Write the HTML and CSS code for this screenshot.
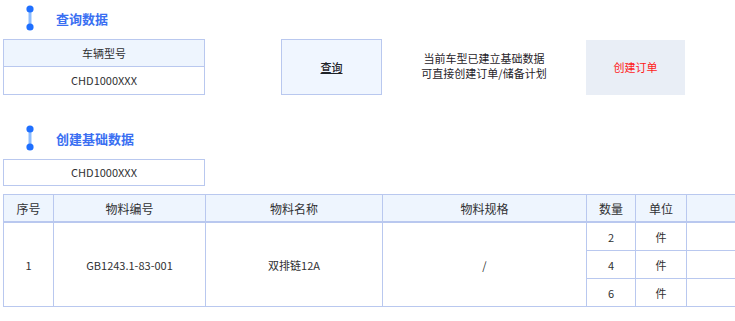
FILE: index.html
```html
<!DOCTYPE html>
<html lang="zh-CN">
<head>
    <meta charset="UTF-8">
    <meta name="viewport" content="width=device-width, initial-scale=1.0">
    <title>基础数据</title>
    <link rel="stylesheet" href="styles.css">
</head>
<body>
    <div class="section-title first">
        <svg class="title-icon" width="10" height="26" viewBox="0 0 10 26">
            <line x1="5" y1="4" x2="5" y2="22" stroke="#8cbcff" stroke-width="3"/>
            <circle cx="5" cy="4" r="3.6" fill="#1f6fff"/>
            <circle cx="5" cy="22" r="3.6" fill="#1f6fff"/>
        </svg>
        <span>查询数据</span>
    </div>

    <div class="query-row">
        <div class="field-box">
            <div class="field-head">车辆型号</div>
            <div class="field-value">CHD1000XXX</div>
        </div>
        <div class="query-btn">查询</div>
        <div class="notice">当前车型已建立基础数据<br>可直接创建订单/储备计划</div>
        <div class="order-btn">创建订单</div>
    </div>

    <div class="section-title second">
        <svg class="title-icon" width="10" height="26" viewBox="0 0 10 26">
            <line x1="5" y1="4" x2="5" y2="22" stroke="#8cbcff" stroke-width="3"/>
            <circle cx="5" cy="4" r="3.6" fill="#1f6fff"/>
            <circle cx="5" cy="22" r="3.6" fill="#1f6fff"/>
        </svg>
        <span>创建基础数据</span>
    </div>

    <div class="model-box">CHD1000XXX</div>

    <div class="table-wrap">
        <table class="material-table">
            <colgroup>
                <col class="c-no">
                <col class="c-code">
                <col class="c-name">
                <col class="c-spec">
                <col class="c-qty">
                <col class="c-unit">
                <col class="c-rest">
            </colgroup>
            <thead>
                <tr>
                    <th>序号</th>
                    <th>物料编号</th>
                    <th>物料名称</th>
                    <th>物料规格</th>
                    <th>数量</th>
                    <th>单位</th>
                    <th></th>
                </tr>
            </thead>
            <tbody>
                <tr>
                    <td rowspan="3">1</td>
                    <td rowspan="3">GB1243.1-83-001</td>
                    <td rowspan="3">双排链12A</td>
                    <td rowspan="3">/</td>
                    <td>2</td>
                    <td>件</td>
                    <td></td>
                </tr>
                <tr>
                    <td>4</td>
                    <td>件</td>
                    <td></td>
                </tr>
                <tr>
                    <td>6</td>
                    <td>件</td>
                    <td></td>
                </tr>
            </tbody>
        </table>
    </div>
</body>
</html>
```

FILE: styles.css
```css
body {
    font-family: "Noto Sans CJK SC", "Noto Sans", sans-serif;
    font-size: 11px;
    color: #303133;
    background-color: #FFFFFF;
    margin: 0;
    padding: 0 0 0 3px;
    overflow: hidden;
}
.section-title {
    display: flex;
    align-items: center;
    height: 36px;
    margin-bottom: 3px;
    color: #3a6ff2;
    font-size: 13px;
    font-weight: bold;
}
.section-title.second {
    margin-top: 25px;
}
.title-icon {
    margin-left: 22px;
    margin-right: 21px;
}
.query-row {
    display: grid;
    grid-template-columns: 202px 76px 101px 204px 99px;
    align-items: start;
}
.field-box {
    border: 1px solid #b9c8ef;
}
.field-head {
    height: 26px;
    line-height: 26px;
    text-align: center;
    background-color: #eef5fe;
    border-bottom: 1px solid #b9c8ef;
}
.field-value {
    height: 27px;
    line-height: 27px;
    text-align: center;
}
.query-btn {
    grid-column: 3;
    height: 54px;
    line-height: 54px;
    text-align: center;
    background-color: #f0f6ff;
    border: 1px solid #b9c8ef;
    text-decoration: underline;
    font-weight: 500;
    color: #1f2329;
}
.notice {
    padding-top: 12px;
    text-align: center;
    line-height: 15px;
    color: #1f2329;
}
.order-btn {
    margin-top: 1px;
    height: 55px;
    line-height: 55px;
    text-align: center;
    background-color: #e9eef6;
    color: #ff1a1a;
}
.model-box {
    width: 200px;
    height: 25px;
    line-height: 25px;
    text-align: center;
    border: 1px solid #b9c8ef;
}
.table-wrap {
    margin-top: 8px;
    overflow: hidden;
}
.material-table {
    border-collapse: collapse;
    table-layout: fixed;
    width: 832px;
}
.c-no { width: 50px; }
.c-code { width: 152px; }
.c-name { width: 177px; }
.c-spec { width: 204px; }
.c-qty { width: 49px; }
.c-unit { width: 51px; }
.c-rest { width: 149px; }
.material-table th,
.material-table td {
    border: 1px solid #b9c8ef;
    text-align: center;
    padding: 0;
}
.material-table th {
    height: 26px;
    background-color: #eef5fe;
    font-weight: normal;
    font-size: 12px;
    border-bottom: 2px solid #b9c8ef;
}
.material-table td {
    height: 27px;
}
```
